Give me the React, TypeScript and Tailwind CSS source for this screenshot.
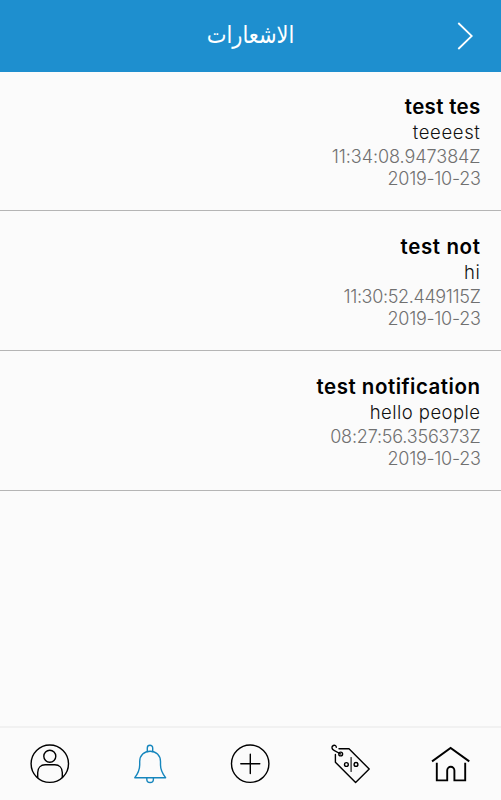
import type { ReactNode } from "react";

type Notification = {
    title: string;
    body: string;
    time: string;
    date: string;
    titleClass: string;
    bodyClass: string;
    timeClass: string;
};

const notifications: Notification[] = [
    {
        title: "test tes",
        body: "teeeest",
        time: "11:34:08.947384Z",
        date: "2019-10-23",
        titleClass: "tracking-[0.3px]",
        bodyClass: "tracking-[0.65px]",
        timeClass: "tracking-[-0.05px]",
    },
    {
        title: "test not",
        body: "hi",
        time: "11:30:52.449115Z",
        date: "2019-10-23",
        titleClass: "tracking-[0.6px]",
        bodyClass: "tracking-[0.65px]",
        timeClass: "tracking-[-0.35px]",
    },
    {
        title: "test notification",
        body: "hello people",
        time: "08:27:56.356373Z",
        date: "2019-10-23",
        titleClass: "tracking-[0.5px]",
        bodyClass: "tracking-[0.45px]",
        timeClass: "tracking-[-0.2px]",
    },
];

function NavIcon({ active, label, children }: { active?: boolean; label: string; children: ReactNode }) {
    return (
        <button aria-label={label} className={`flex flex-1 justify-center pt-4 ${active ? "text-[#1686bd]" : "text-black"}`}>
            <svg
                viewBox="0 0 40 40"
                className="size-10 overflow-visible"
                fill="none"
                stroke="currentColor"
                strokeWidth="1.4"
                strokeLinecap="round"
                strokeLinejoin="round"
            >
                {children}
            </svg>
        </button>
    );
}

function BottomNav() {
    return (
        <nav className="flex h-[74px] border-t-2 border-[#f1f1f1] pr-px">
            <NavIcon label="Profile">
                <circle cx="19.8" cy="19.7" r="18.7" />
                <circle cx="19.8" cy="12.3" r="6" />
                <path d="M7.7 33.5V28.5C7.7 23.8 10.8 20.8 15.2 20.8H24.8C29.2 20.8 32.3 23.8 32.3 28.5V33.5" />
            </NavIcon>
            <NavIcon label="Notifications" active>
                <path d="M17.3 7.5V4A2.7 2.7 0 0 1 22.7 4V7.5" />
                <path d="M4.8 33.7C8 29.5 9.7 26 9.7 21V17.5C9.7 11.2 14.2 7.2 20.1 7.2S30.5 11.2 30.5 17.5V21C30.5 26 32.4 29.5 35.6 33.7Z" />
                <path d="M16.8 34V35.2A3.3 3.3 0 0 0 23.4 35.2V34" />
            </NavIcon>
            <NavIcon label="Add">
                <circle cx="20.2" cy="19.7" r="18.7" />
                <path d="M10.8 19.8H29.8M20.3 10.3V29.6" />
            </NavIcon>
            <NavIcon label="Offers">
                <path d="M9 4.8H19L39.2 25L25.6 38.6L5.4 18.2V10.5" />
                <circle cx="10.7" cy="10" r="1.9" />
                <path d="M10.7 10L4 6.4C1.5 5.2 1.3 2.5 3.3 1.5C4.8.8 6.3 1.6 6.3 3.2" />
                <circle cx="16.4" cy="20.5" r="1.9" />
                <circle cx="26" cy="20.4" r="1.9" />
                <path d="M21.1 13.5V27.5" strokeWidth="1.1" />
            </NavIcon>
            <NavIcon label="Home">
                <g strokeWidth="1.9" strokeLinecap="square" strokeLinejoin="miter">
                    <path d="M2.8 16.8L20.6 3.9L38.5 16.8" />
                    <path d="M6.8 19.6V36.4H17.2V26.4A3.6 3.6 0 0 1 24.4 26.4V36.4H35.2V19.6" />
                </g>
            </NavIcon>
        </nav>
    );
}

export default function App() {
    return (
        <div className="flex h-screen w-full flex-col bg-[#fbfbfb] font-['Inter',sans-serif]">
            <header className="grid h-[72px] shrink-0 grid-cols-[1fr_auto_1fr] items-center bg-[#1e8fcf] text-white">
                <span />
                <h1 dir="rtl" lang="ar" className="scale-y-115 font-['DejaVu_Sans',sans-serif] text-[21px]">
                    الاشعارات
                </h1>
                <button aria-label="Back" className="mr-7 justify-self-end">
                    <svg viewBox="0 0 16 28" className="h-7 w-4" fill="none" stroke="currentColor" strokeWidth="1.8">
                        <path d="M1.3 1L14.8 14L1.3 27" />
                    </svg>
                </button>
            </header>
            <main className="-mt-px flex-1">
                {notifications.map((item) => (
                    <article
                        key={item.title}
                        className="flex h-[140px] flex-col items-end border-b border-[#b5b5b5] pt-[23px] pr-[20.5px] whitespace-nowrap"
                    >
                        <h2 className={`text-[20.5px] leading-[26px] font-semibold text-black ${item.titleClass}`}>{item.title}</h2>
                        <p className={`text-[18.5px] leading-[25px] font-light text-[#111] ${item.bodyClass}`}>{item.body}</p>
                        <p className={`text-lg leading-[23px] font-light text-[#707070] ${item.timeClass}`}>{item.time}</p>
                        <p className="text-lg leading-[22px] font-light tracking-[-0.3px] text-[#707070]">{item.date}</p>
                    </article>
                ))}
            </main>
            <BottomNav />
        </div>
    );
}
